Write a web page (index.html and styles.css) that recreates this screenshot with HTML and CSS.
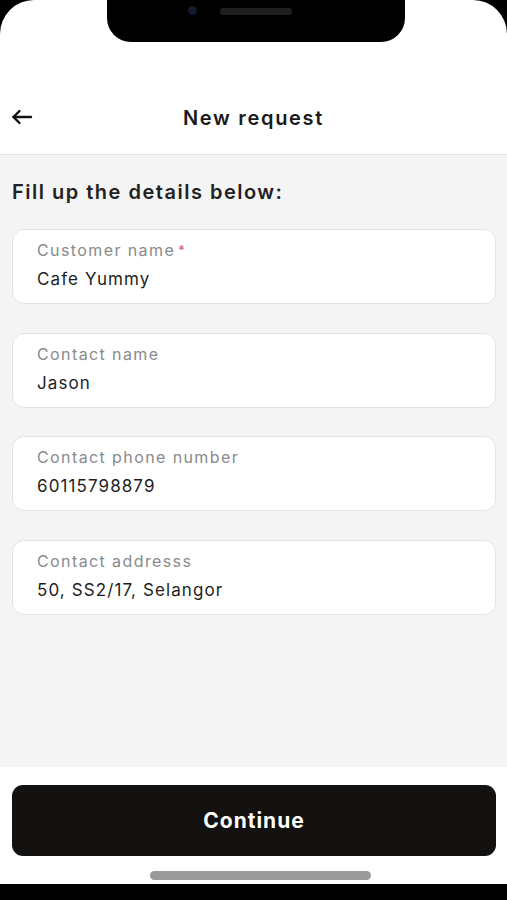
FILE: index.html
```html
<!DOCTYPE html>
<html lang="en">
<head>
  <meta charset="UTF-8" />
  <title>New request</title>
  <link rel="stylesheet" href="styles.css">
</head>
<body>
  <div class="screen">
    <!-- 상단 노치 -->
    <div class="notch">
      <span class="camera"></span>
      <span class="speaker"></span>
    </div>

    <div class="status"></div>

    <div class="header">
      <button class="back" aria-label="Back">
        <svg width="24" height="24" viewBox="0 0 24 24" fill="none" stroke="#111" stroke-width="2.4" stroke-linecap="round" stroke-linejoin="round">
          <path d="M21 12H3.5" />
          <path d="M9.5 6L3.5 12L9.5 18" />
        </svg>
      </button>
      <h1>New request</h1>
    </div>

    <div class="main">
      <h2>Fill up the details below:</h2>

      <div class="field">
        <label>Customer name<span class="req">*</span></label>
        <div class="value">Cafe Yummy</div>
      </div>

      <div class="field">
        <label>Contact name</label>
        <div class="value">Jason</div>
      </div>

      <div class="field">
        <label>Contact phone number</label>
        <div class="value">60115798879</div>
      </div>

      <div class="field">
        <label>Contact addresss</label>
        <div class="value">50, SS2/17, Selangor</div>
      </div>
    </div>

    <div class="footer">
      <button class="continue">Continue</button>
      <div class="home-bar"></div>
    </div>
  </div>
</body>
</html>
```

FILE: styles.css
```css
html, body {
  margin: 0;
  padding: 0;
  background: #000;
  font-family: "Inter", "Noto Sans", sans-serif;
  color: #1c1c1c;
}

.screen {
  position: relative;
  height: 884px;
  display: flex;
  flex-direction: column;
  background: #fff;
  border-radius: 34px 34px 0 0;
  overflow: hidden;
}

.notch {
  position: absolute;
  top: 0;
  left: 107px;
  width: 298px;
  height: 42px;
  background: #000;
  border-radius: 0 0 24px 24px;
}

.camera {
  position: absolute;
  top: 6px;
  left: 81px;
  width: 9px;
  height: 9px;
  border-radius: 50%;
  background: #141a2e;
}

.speaker {
  position: absolute;
  top: 8px;
  left: 113px;
  width: 72px;
  height: 7px;
  border-radius: 4px;
  background: #1e1e1e;
}

.status {
  height: 80px;
}

.header {
  position: relative;
  height: 74px;
  display: flex;
  align-items: center;
  justify-content: center;
  border-bottom: 1px solid #e4e4e4;
}

.back {
  position: absolute;
  left: 10px;
  top: 25px;
  padding: 0;
  border: 0;
  background: none;
  display: flex;
}

.header h1 {
  margin: 2px 0 0;
  font-size: 20px;
  font-weight: 600;
  letter-spacing: 1.7px;
  color: #1a1a1a;
}

.main {
  flex: 1;
  background: #f4f4f4;
  padding: 25px 11px 0 12px;
}

.main h2 {
  margin: 0 0 25px;
  font-size: 20px;
  line-height: 24px;
  font-weight: 600;
  letter-spacing: 1.5px;
  color: #222;
}

.field {
  height: 75px;
  box-sizing: border-box;
  margin-bottom: 28.6px;
  padding: 10px 24px 0;
  background: #fff;
  border: 1px solid #e3e3e3;
  border-radius: 12px;
}

.field label {
  display: block;
  font-size: 16px;
  line-height: 20px;
  letter-spacing: 1.4px;
  color: #8a8a8a;
}

.req {
  margin-left: 3px;
  color: #e0507a;
  font-size: 13px;
  vertical-align: top;
}

.value {
  margin-top: 7px;
  font-size: 17px;
  line-height: 24px;
  letter-spacing: 1.1px;
  color: #1e1e1e;
}

.footer {
  height: 117px;
  box-sizing: border-box;
  padding: 18px 11px 0 12px;
  display: flex;
  flex-direction: column;
  background: #fff;
}

.continue {
  height: 71px;
  border: 0;
  border-radius: 11px;
  background: #141111;
  color: #fff;
  font-family: inherit;
  font-size: 21px;
  font-weight: 700;
  letter-spacing: 1px;
}

.home-bar {
  width: 221px;
  height: 9px;
  margin: 15px 0 0 138px;
  border-radius: 5px;
  background: #9a9a9a;
}
```
